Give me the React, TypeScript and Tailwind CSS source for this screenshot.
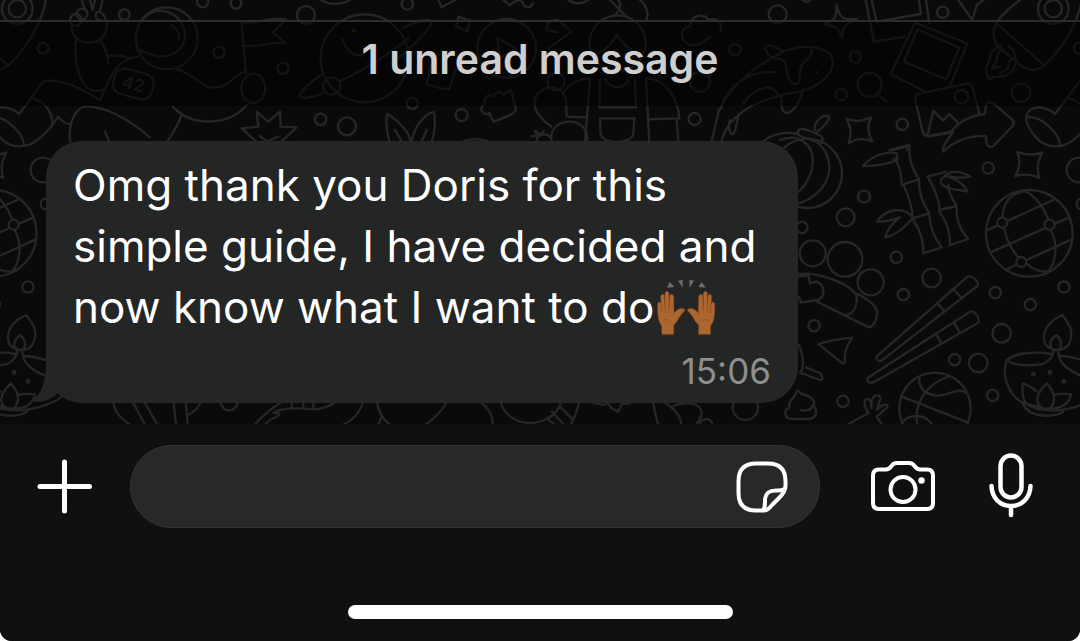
import type { ReactNode } from "react";

const TILE_W = 1036;

type Dot = [number, number, number];

function Dots({ items }: { items: Dot[] }) {
  return (
    <>
      {items.map(([x, y, r]) => (
        <circle key={`${x}-${y}-${r}`} cx={x} cy={y} r={r} />
      ))}
    </>
  );
}

// doodles are sketched on a 3x grid
function Patch({ x, y, children }: { x: number; y: number; children: ReactNode }) {
  return <g transform={`translate(${x} ${y}) scale(0.3333)`}>{children}</g>;
}

function Doodles() {
  return (
    <g id="doodles" fill="none" stroke="#252626" strokeWidth="7" strokeLinecap="round" strokeLinejoin="round">
      <Patch x={0} y={0}>
        {/* boot */}
        <path d="M300 300C250 270 180 230 130 245L57 342C32 320-3 315-23 335C-38 355-28 375-13 395C12 435 47 443 77 437C110 430 150 390 175 350C185 365 195 370 210 373M95 295C130 300 155 330 158 372M-25 352C10 345 70 395 72 437" />
        {/* astronaut */}
        <circle cx="500" cy="115" r="93" />
        <path d="M412 145C395 90 430 35 480 32C540 35 565 90 550 130C535 165 500 172 470 168C440 162 415 150 412 145ZM513 75C530 85 540 100 537 118" />
        <path d="M228 118C222 180 235 260 280 272Q295 274 312 268M300 120C320 150 325 175 324 192M325 168C350 163 370 168 395 175M415 170C350 175 330 230 300 302" />
        <path d="M215 75C212 110 240 130 270 128C310 125 325 95 320 65C315 45 300 30 290 38C282 50 295 65 303 60M245 0C250 20 255 30 260 32M270 0L278 30L285 0M300 30L308 0" />
        <rect x="340" y="213" width="120" height="78" rx="30" transform="rotate(15 400 252)" />
        <text x="400" y="270" textAnchor="middle" transform="rotate(15 400 252)" fill="#2a2b2b" stroke="none" fontSize="52" fontWeight="600" fontFamily="Inter, sans-serif">42</text>
        <path d="M530 208C590 225 600 262 640 263C690 262 700 225 735 214M740 315C690 375 580 385 518 320M545 343C535 375 515 405 503 424M210 424C205 370 225 320 260 320C330 320 400 370 450 412M315 395L328 424" />
        <ellipse cx="760" cy="265" rx="36" ry="44" />
        <path d="M738 220L725 68C770 72 810 50 858 58L818 97L857 130C820 122 780 142 735 138" />
        <path d="M768 424L725 385L775 380L770 335L805 365L840 335L842 380L890 382L845 424M780 408L800 424L835 410" />
        <path d="M965 0C985 15 1025 15 1050 0" />
        <Dots items={[[129, 145, 16], [228, 60, 18], [246, 42, 16], [373, 44, 16], [608, 5, 17], [708, 10, 16], [918, 45, 27], [657, 157, 17], [849, 205, 17], [962, 358, 17], [1041, 379, 27], [1062, 92, 3]]} />
        {/* planet */}
        <circle cx="1094" cy="175" r="132" />
        <path d="M1028 118C1035 145 1050 165 1085 168M970 220C930 245 890 285 902 292C920 298 960 285 975 275M1018 245C1080 215 1160 170 1225 115M1210 85C1250 60 1295 55 1295 68C1285 95 1230 150 1175 190" />
        <circle cx="995" cy="258" r="26" />
      </Patch>

      <Patch x={360} y={0}>
        <path d="M235 0L245 22L285 0M430 0L450 15C470 0 480-5 490 10C490 25 515 25 518 10M620-5C640 15 670 15 690-5M295 50L330 62L322 93L288 80Z" />
        <circle cx="440" cy="145" r="88" />
        <path d="M412 115L468 145L420 175ZM565 145L635 95L605 70C595 50 555 60 562 90L595 98M215 190L200 250C215 262 240 265 268 268L288 205" />
        {/* gardener */}
        <circle cx="773" cy="130" r="84" />
        <path d="M685 165C720 165 750 140 770 105C800 150 830 160 850 165M750 0L800 50M775 0C790 20 770 40 765 45M840 0C865 20 870 60 850 65" />
        <path d="M690 235C650 235 620 260 610 280M690 240L675 424M858 240L868 424M858 235C920 235 955 300 958 355L868 358M950 355L955 424M720 240L718 322L828 322L825 240M720 355L823 355L820 400C815 435 725 435 722 400ZM735 235C745 270 800 270 806 235" />
        <path d="M575 380C530 350 520 320 525 300C535 250 610 250 618 300L620 350L675 352M575 424C560 350 690 340 682 424M515 408L530 408L525 392L542 405L552 392M530 424C530 400 560 400 570 410" />
        <path d="M995 135C960 130 955 80 990 80C990 40 1040 40 1045 60C1075 50 1090 70 1080 95M995 135C1020 140 1035 120 1050 110" />
        {/* puzzle piece */}
        <path d="M400 365L388 340C365 350 355 320 375 312C370 290 385 280 400 290C410 270 425 275 430 285L452 270C458 290 465 315 468 330C460 345 430 355 400 365Z" />
        <path d="M88 424C75 380 80 345 82 342C110 360 145 390 152 424M155 424C165 370 200 340 222 335C228 370 222 410 215 424M105 390L125 424M200 390L185 424M1055 424L1078 325M310 424C330 416 360 416 385 424" />
        <Dots items={[[142, 12, 17], [588, 245, 26], [157, 310, 17], [305, 345, 18], [1004, 357, 18], [1020, 245, 30]]} />
      </Patch>

      <Patch x={720} y={0}>
        {/* dolphin */}
        <path d="M0 330C20 270 100 200 190 155C250 130 330 140 338 180C345 230 280 265 240 275C170 285 90 310 50 350C20 375 10 400 5 424M190 155C160 135 140 133 135 142C140 165 150 172 165 175M170 175C190 175 200 190 200 215C205 240 215 255 230 252C245 245 235 215 245 195C255 180 280 170 275 150M185 290C180 320 190 345 205 338C230 330 245 290 250 265M70 310C110 250 170 255 172 285M10 300C50 230 120 210 165 217M30 360C22 385 30 405 40 402C48 395 52 360 55 345" />
        <path d="M350 15C358 55 370 60 410 57C375 70 368 80 367 115C355 80 345 78 312 72C345 65 350 50 350 15ZM380 357Q418 370 453 352Q435 388 457 424Q420 408 386 430Q400 393 380 357Z" />
        {/* photos */}
        <path d="M437 0L462 125L555 110M455 0L470 65L603 42L597 0M618 0L628 70M585 68L742 130L690 258M585 68L512 222L615 275M592 88L718 143L678 238L552 185Z" />
        <path d="M778 340L758 265Q752 248 735 252L600 280Q583 283 586 300L608 395Q612 412 635 408L680 400M622 408L640 332L670 362L688 342L718 372" />
        <path d="M715 0L757 60L770 15L790 0M474 282L498 305M510 450L568 435L560 450" />
        {/* arrow */}
        <path d="M608 390C612 408 625 412 640 405L700 395C680 420 665 445 670 455C700 425 750 405 798 408L800 430Q805 445 820 438L878 378Q884 370 880 362L822 312Q805 302 798 312L795 342C750 345 710 370 690 400" />
        {/* rocket */}
        <path d="M900 0C860 30 825 65 822 90C815 140 850 150 890 185C920 215 950 215 975 195C1030 140 1070 80 1086 0M825 65L970 195" />
        <path d="M845 137C800 150 815 180 800 200C795 220 805 235 812 240C815 222 840 240 870 220C895 200 890 150 865 140M850 145C820 165 840 175 825 190L815 205L840 200M885 180C870 170 860 195 865 205L840 220" />
        {/* lantern cap */}
        <path d="M285 390C280 365 310 340 328 350C325 370 305 385 292 395M238 388C250 382 290 400 305 410Q312 418 303 430L240 408Q228 398 238 388ZM130 424C160 400 200 395 235 402" />
        <Dots items={[[173, 43, 27], [260, -12, 17], [45, 149, 17], [406, 171, 17], [364, 284, 17], [547, 373, 17], [668, 37, 17], [903, 278, 28], [724, 290, 20], [449, 254, 36], [1000, 26, 46], [1000, 26, 26], [289, 217, 2]]} />
      </Patch>

      <Patch x={780} y={130}>
        <circle cx="82" cy="130" r="104" />
        <path d="M70 35C110 60 110 130 57 185M100 30C170 70 170 180 57 220M0 30C30 20 50 20 70 35" />
        {/* bamboo */}
        <path d="M335 60L388 48C385 80 395 115 417 148L365 165C365 130 355 100 342 85M372 168C385 200 398 230 398 265L448 250C430 220 415 190 417 152M400 270C420 300 432 330 430 370L485 352C460 320 450 290 448 255M350 70C310 60 270 85 248 108C290 108 330 100 352 90ZM398 262C370 225 310 240 292 275C320 275 345 268 360 262C335 280 320 305 315 322C350 315 375 290 398 265" />
        <path d="M498 125L443 140C460 170 480 210 478 240L530 228C515 205 505 185 505 165M478 245C500 275 512 310 510 345L565 327C540 300 528 265 530 232M495 138C510 120 545 122 572 140C545 148 520 140 495 138C475 150 480 165 500 172C520 180 545 180 563 185C550 160 530 148 510 142" />
        <path d="M712 66Q750 80 787 68Q765 105 778 143Q742 128 706 138Q727 100 712 66Z" />
        {/* globe */}
        <circle cx="748" cy="310" r="130" />
        <path d="M623 300L820 210M637 365L868 262M680 418L875 328M667 262C670 220 690 190 735 183C770 200 795 240 805 268M672 294C680 330 695 360 715 382M812 300C835 340 830 400 800 430M740 402C760 420 790 430 815 422" />
        <g fill="#0a0a0a">
          <Dots items={[[667, 278, 15], [809, 284, 15], [724, 396, 15]]} />
        </g>
        <Dots items={[[625, 114, 17], [252, 200, 18], [197, 262, 27], [66, 292, 17], [349, 382, 17], [98, 370, 39], [195, 388, 52], [272, 457, 39], [455, 444, 28], [897, 120, 37], [907, 222, 17]]} />
      </Patch>

      <Patch x={780} y={270}>
        {/* mitten */}
        <path d="M57 12C110 5 215 40 230 80C232 110 220 130 200 135M105 92L262 170C285 178 295 130 290 120C280 95 240 75 228 70M57 20L85 15L90 40L110 35C140 50 135 85 110 90L62 98L57 80" />
        <path d="M115 222Q160 208 217 203Q190 240 195 275Q195 285 185 278Z" />
        {/* chopsticks */}
        <path d="M292 258L560 22C575 12 600 35 592 48L305 272C295 275 285 268 292 258ZM472 100L492 122M523 60L545 85M268 320L570 125C585 120 600 145 595 158L278 338C262 340 258 330 268 320ZM470 195L485 220M523 160L540 188" />
        {/* basketball */}
        <circle cx="465" cy="415" r="107" />
        <path d="M365 380L565 458M418 322C415 360 440 375 475 377C510 375 540 350 560 370M510 318C440 340 400 400 412 465M365 460C380 435 430 425 458 465" />
        <path d="M205 462L265 430C245 395 255 380 270 390L275 415C270 370 300 370 302 385L290 420C310 400 325 400 322 412L290 440L305 462" />
        <path d="M52 360C50 380 20 395 28 412C10 420 12 446 35 447L90 447C115 440 110 415 100 408C110 385 80 375 65 372ZM62 420C80 425 95 418 97 408M57 225C70 260 75 290 60 308L120 330L128 326L122 310L78 292" />
        {/* diya */}
        <path d="M847 135C870 165 885 190 865 225C850 245 810 245 795 220C785 190 800 155 847 135ZM830 195C850 215 845 240 828 240C805 240 805 210 830 195Z" />
        <path d="M815 252C780 245 710 245 680 270C700 290 790 290 800 275C815 265 820 255 820 242M835 245C835 280 870 310 930 325M840 258C900 260 960 290 990 305M680 270C660 330 700 390 735 400C780 430 860 430 940 390C970 370 985 340 990 305M728 400C750 450 830 440 850 425" />
        <path d="M800 340C830 370 825 400 810 415L790 415C760 400 770 370 800 340ZM770 365C755 350 745 345 728 340C725 370 730 390 740 402L785 413M820 375Q845 370 873 373C870 395 850 415 815 415" />
        <Dots items={[[760, 312, 4], [810, 307, 4], [852, 334, 4], [102, 167, 17], [524, 269, 17], [595, 279, 28], [646, 68, 17], [751, 104, 17], [665, 190, 28], [852, 51, 17], [638, 376, 17], [189, 394, 17], [370, 74, 17]]} />
      </Patch>

      <Patch x={20} y={380}>
        <path d="M280 60C280 100 310 120 330 134M335 60L375 134M370 60L412 134M460 60L468 134M497 60L503 134M545 60C535 90 515 100 503 105M600 60C605 102 650 102 655 60M705 134C740 90 770 80 790 60M735 134C750 110 780 115 778 100L760 98C790 80 850 85 880 88C910 88 930 80 955 60M815 60V80M850 60V82M880 60V86M1032 60C1020 100 1000 120 970 134M1070 60C1075 100 1090 120 1110 134M1085 110L1075 134" />
      </Patch>
      <Patch x={400} y={390}>
        <path d="M145 30C120 70 100 90 75 104M235 30C275 60 280 85 278 104M300 30C320 120 450 120 482 42M440 85L465 104M455 65L492 104M478 48L515 85M540 30C530 70 520 90 512 104M580 38L610 45L625 40L635 55L655 65L665 42L690 40M758 30C765 70 770 90 775 104M785 30C830 60 845 85 843 104M820 48C850 35 905 35 905 70C905 85 895 90 890 102M898 104C905 82 935 82 937 104" />
        <circle cx="1036" cy="52" r="38" />
      </Patch>
    </g>
  );
}

function Wallpaper() {
  return (
    <svg className="absolute inset-0 size-full" aria-hidden="true">
      <Doodles />
      <use href="#doodles" x={-TILE_W} />
      <use href="#doodles" x={TILE_W} />
    </svg>
  );
}

function RaisedHands() {
  const hand =
    "M68 192L67 166C58 156 54 136 55 100Q60 90 66 100L67 118L64 78Q69 66 75 76L77 112L77 68Q83 58 89 68L89 112L91 76Q97 66 103 78L104 128C112 118 124 112 134 116Q139 121 132 126C121 134 116 154 103 164L103 192Z";
  const creases = "M67 118L68 128M77 112L78 126M89 112L89 126M104 128L100 136M72 150Q86 142 96 156";
  return (
    <svg className="-my-3 ml-[2px] inline-block size-[60px] align-[-2px]" viewBox="50 20 180 180" role="img" aria-label="🙌🏾">
      <path d="M91 34L105 50L83 52ZM116 31L130 28L130 52ZM150 28L164 31L151 52ZM187 35L199 52L177 50Z" fill="#6b6d6d" />
      <g fill="#ae662f" stroke="#8a4d23" strokeWidth="1.5" strokeLinejoin="round" strokeLinecap="round">
        <path d={hand} />
        <path d={creases} fill="none" strokeWidth="2" />
        <g transform="matrix(-1 0 0 1 281 0)">
          <path d={hand} />
          <path d={creases} fill="none" strokeWidth="2" />
        </g>
      </g>
    </svg>
  );
}

function MessageBubble() {
  return (
    <div className="relative ml-[46px] w-fit max-w-[752px] rounded-[36px] bg-[#242626] px-[27px] pt-[14px] pb-[10px]">
      <svg className="absolute bottom-0 -left-4 h-10 w-8" viewBox="0 0 32 40" fill="#242626" aria-hidden="true">
        <path d="M16 0C16 18 12 31 1 38C9 40 19 38 26 32L32 20V0Z" />
      </svg>
      <p className="relative text-[44px] leading-[61px] text-white">
        Omg thank you Doris for this simple guide, I have decided and now know what I want to do
        <RaisedHands />
      </p>
      <time className="relative mt-[11px] block text-right text-[35px] leading-[44px] text-[#8e9090]">15:06</time>
    </div>
  );
}

function Composer() {
  return (
    <footer className="flex flex-col bg-[#101010] pt-[21px] pb-[22px]">
      <form className="flex items-center pr-[47px] pl-9" onSubmit={(e) => e.preventDefault()}>
        <button type="button" aria-label="Attach" className="mr-[38px] text-white">
          <svg className="size-14" viewBox="0 0 56 56" stroke="currentColor" strokeWidth="5" strokeLinecap="round">
            <path d="M28.5 3V52M4 27.5H53.5" />
          </svg>
        </button>
        <div className="flex h-[83px] min-w-0 flex-1 items-center rounded-full border border-[#363636] bg-[#282828] pr-[31px] pl-8">
          <input type="text" aria-label="Message" className="min-w-0 flex-1 bg-transparent text-[40px] text-white outline-none" />
          <button type="button" aria-label="Stickers" className="text-white">
            <svg className="size-[52px]" viewBox="0 0 52 52" fill="none" stroke="currentColor" strokeWidth="4" strokeLinejoin="round">
              <path d="M28 49.5H20C8 49.5 2.5 43 2.5 32V20C2.5 8 9 2.5 20 2.5H32C43 2.5 49.5 8 49.5 20V25C49.5 30 47 33 43 37L37 43C34 46 32 49.5 28 49.5Z" />
              <path d="M27.5 49C29.5 45 29 42 29 38C30 31 34 29.5 40 29.5C43 29.5 46 29.5 48.5 28" />
            </svg>
          </button>
        </div>
        <button type="button" aria-label="Camera" className="ml-[51px] text-white">
          <svg className="h-[54px] w-16" viewBox="0 0 64 54" fill="none" stroke="currentColor" strokeWidth="4" strokeLinejoin="round">
            <path d="M8 9.5H15C18 9.5 19 8 20.5 6C22 3.500 23.500 3 26 3H38C40.500 3 42 3.500 43.500 6C45 8 46 9.500 49 9.500H56C60 9.500 62 11.500 62 15.500V43C62 47 60 49 56 49H8C4 49 2 47 2 43V15.500C2 11.500 4 9.500 8 9.500Z" />
            <circle cx="32" cy="29.5" r="12.5" />
            <circle cx="50.5" cy="20.5" r="3.2" fill="currentColor" stroke="none" />
          </svg>
        </button>
        <button type="button" aria-label="Record voice message" className="ml-[54px] text-white">
          <svg className="h-[68px] w-11" viewBox="0 0 44 68" fill="none" stroke="currentColor" strokeWidth="4.5" strokeLinecap="round">
            <rect x="11.5" y="2.5" width="21" height="42" rx="10.5" />
            <path d="M2.5 33C3 45 11 53 22 53C33 53 41 45 41.5 33M22 53V62" />
          </svg>
        </button>
      </form>
      <div className="mt-[77px] h-[14px] w-[385px] self-center rounded-full bg-white" />
    </footer>
  );
}

export default function App() {
  return (
    <div className="flex min-h-screen flex-col overflow-hidden rounded-b-xl bg-[#0a0a0a] font-['Inter','Liberation_Sans',sans-serif]">
      <main className="relative flex-1 overflow-hidden pt-5 pb-[21px]">
        <Wallpaper />
        <div className="relative mb-[35px] border-t-2 border-[#2c2c2c] bg-black/50 pt-[11px] pb-[21px] text-center">
          <h2 className="text-[41px] leading-[52px] font-semibold text-[#cfcfcf]">1 unread message</h2>
        </div>
        <MessageBubble />
      </main>
      <Composer />
    </div>
  );
}
